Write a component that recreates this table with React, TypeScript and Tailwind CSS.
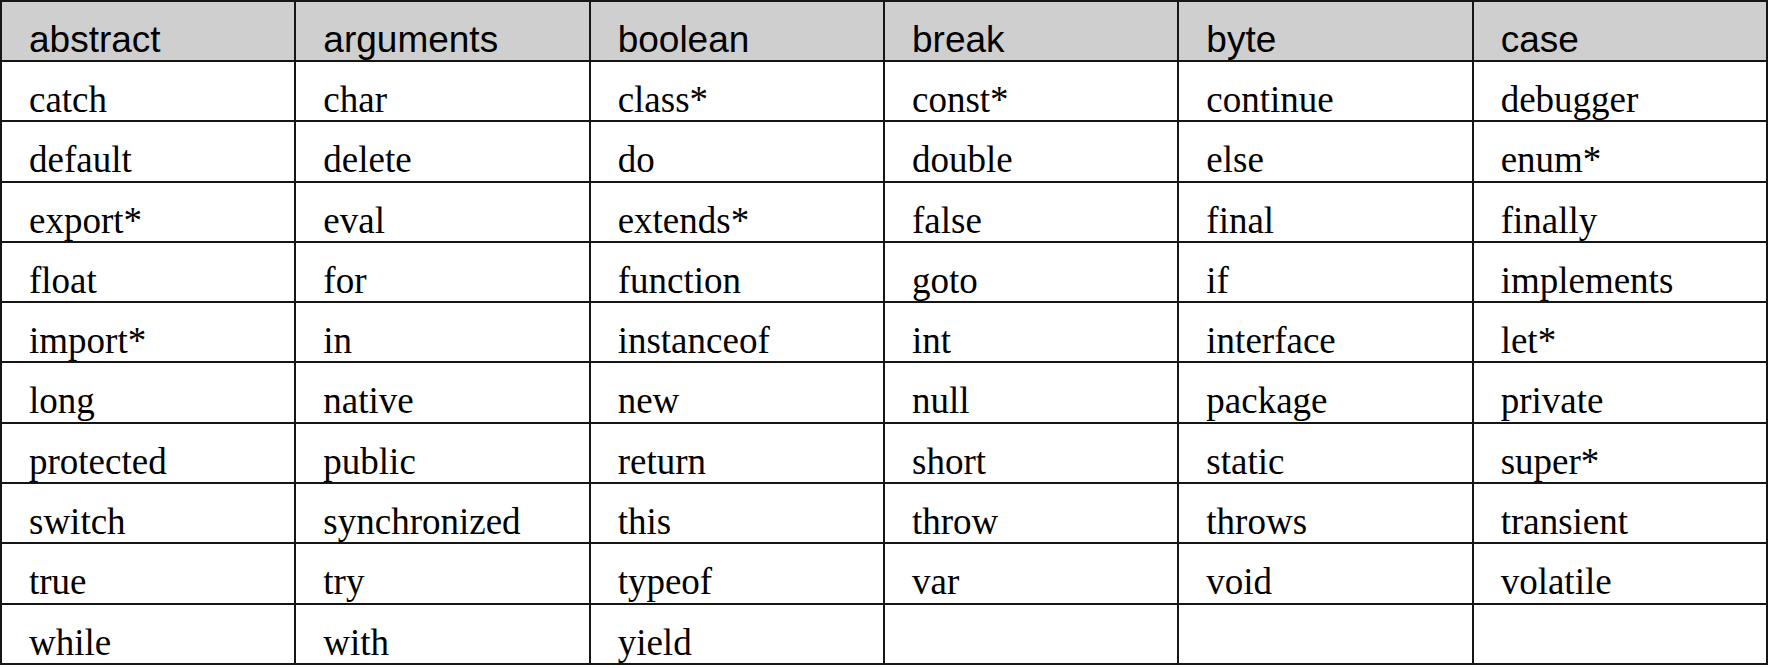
const header = ['abstract', 'arguments', 'boolean', 'break', 'byte', 'case'];

const rows = [
  ['catch', 'char', 'class*', 'const*', 'continue', 'debugger'],
  ['default', 'delete', 'do', 'double', 'else', 'enum*'],
  ['export*', 'eval', 'extends*', 'false', 'final', 'finally'],
  ['float', 'for', 'function', 'goto', 'if', 'implements'],
  ['import*', 'in', 'instanceof', 'int', 'interface', 'let*'],
  ['long', 'native', 'new', 'null', 'package', 'private'],
  ['protected', 'public', 'return', 'short', 'static', 'super*'],
  ['switch', 'synchronized', 'this', 'throw', 'throws', 'transient'],
  ['true', 'try', 'typeof', 'var', 'void', 'volatile'],
  ['while', 'with', 'yield', '', '', ''],
];

export default function App() {
  return (
    <main className="w-[1769px] h-[668px] bg-white overflow-hidden">
      {/* keyword table */}
      <div className="w-[1768px] grid grid-cols-6 border-t-2 border-l-2 border-[#161616] text-black text-[37px] leading-[37px]">
        {header.map((word) => (
          <div
            key={word}
            className="h-[60px] border-r-2 border-b-2 border-[#161616] bg-[#cfcfcf] pl-[27px] pt-[19px] font-['Liberation_Sans',Arial,sans-serif]"
          >
            {word}
          </div>
        ))}
        {rows.map((row, r) =>
          row.map((word, c) => (
            <div
              key={`${r}-${c}`}
              className="h-[60.3px] border-r-2 border-b-2 border-[#161616] pl-[27px] pt-[19px] font-['Liberation_Serif','Times_New_Roman',serif] whitespace-nowrap"
            >
              {word}
            </div>
          ))
        )}
      </div>
    </main>
  );
}
